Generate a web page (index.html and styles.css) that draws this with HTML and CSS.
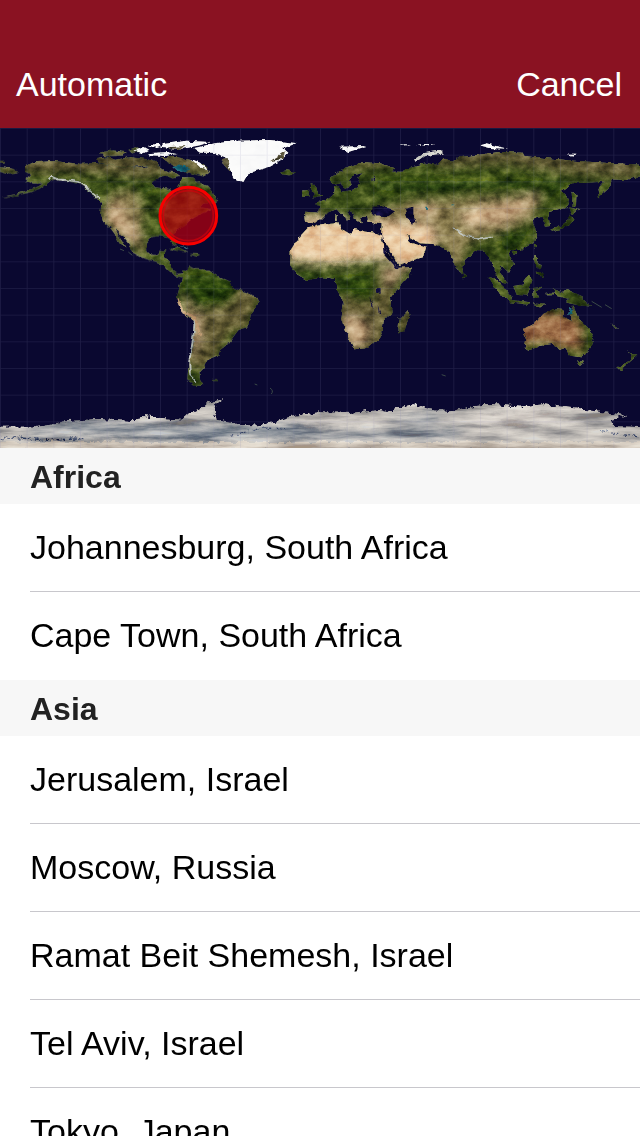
FILE: index.html
```html
<!DOCTYPE html>
<html lang="en">
<head>
<meta charset="utf-8">
<meta name="viewport" content="width=device-width, initial-scale=1">
<title>Choose a location</title>
<link rel="stylesheet" href="styles.css">
</head>
<body class="screen">
<header class="navbar">
  <button class="navbar-button" type="button">Automatic</button>
  <button class="navbar-button" type="button">Cancel</button>
</header>
<svg class="map" viewBox="0 0 1920 960" role="img" aria-label="World map">
  <defs>
    <filter id="terrain" filterUnits="userSpaceOnUse" x="0" y="0" width="1920" height="960" color-interpolation-filters="sRGB">
      <feTurbulence type="fractalNoise" baseFrequency="0.055" numOctaves="3" seed="4" result="coast"/>
      <feDisplacementMap in="SourceGraphic" in2="coast" scale="13" xChannelSelector="R" yChannelSelector="G" result="rough"/>
      <feTurbulence type="fractalNoise" baseFrequency="0.025 0.035" numOctaves="5" seed="9"/>
      <feColorMatrix values="1.3 0 0 0 -0.15  1.2 0 0 0 -0.1  1 0 0 0 0  0 0 0 0 1"/>
      <feComposite in2="rough" operator="in" result="grain"/>
      <feBlend in="grain" in2="rough" mode="soft-light"/>
    </filter>
    <filter id="soft" filterUnits="userSpaceOnUse" x="0" y="0" width="1920" height="960">
      <feGaussianBlur stdDeviation="14"/>
    </filter>
    <filter id="ice" filterUnits="userSpaceOnUse" x="0" y="780" width="1920" height="180" color-interpolation-filters="sRGB">
      <feTurbulence type="fractalNoise" baseFrequency="0.06" numOctaves="4" seed="2" result="coast"/>
      <feDisplacementMap in="SourceGraphic" in2="coast" scale="20" xChannelSelector="R" yChannelSelector="G" result="rough"/>
      <feTurbulence type="fractalNoise" baseFrequency="0.006 0.04" numOctaves="5" seed="5"/>
      <feColorMatrix values="2.2 0 0 0 -0.6  2 0 0 0 -0.5  1.7 0 0 0 -0.35  0 0 0 0 1"/>
      <feComposite in2="rough" operator="in" result="grain"/>
      <feBlend in="grain" in2="rough" mode="soft-light"/>
    </filter>
    <pattern id="grid" width="80" height="80" patternUnits="userSpaceOnUse">
      <path class="grid-line" d="M1 0V80M0 1H80"/>
    </pattern>
    <g id="land">
      <!-- North America -->
      <g transform="translate(0 -24)">
        <path d="M75 140L100 128L160 124L240 132L290 130L330 136L380 140L420 144L450 138L480 145L515 160L480 170L455 190L465 202L510 208L525 228L535 205L545 172L580 173L602 190L622 198L635 215L655 240L640 250L610 250L600 262L635 268L590 288L570 300L555 315L530 330L522 345L530 375L518 372L505 350L480 348L455 350L440 368L442 392L455 405L475 405L480 390L496 392L490 415L510 425L515 450L530 462L552 460L550 472L530 468L505 450L490 432L460 422L430 414L400 398L385 370L365 345L345 325L360 355L378 382L362 370L345 342L328 320L310 305L300 285L305 250L285 230L262 208L235 190L200 182L165 178L145 188L118 206L90 216L50 226L5 232L50 222L80 212L115 200L130 190L100 190L75 182L95 166L75 158Z"/>
        <path d="M0 142L40 148L54 156L30 160L0 152Z M0 123h14v4H0Z M290 118L325 112L345 120L390 112L440 118L470 128L490 150L440 136L390 140L330 134L292 126Z M300 98L340 92L380 98L365 106L310 108Z M385 90L410 82L425 92L402 98Z M480 112L530 112L570 120L610 135L630 155L612 168L582 162L545 148L510 128Z M495 155L525 158L540 168L520 175L500 168Z"/>
        <path d="M508 386L530 380L562 396L545 394L525 390Z M570 402L600 403L590 410Z"/>
      </g>
      <!-- South America -->
      <path transform="translate(420 336)" d="M130 95L150 80L165 88L205 90L240 112L270 125L282 145L320 158L350 172L356 188L337 215L332 240L320 262L295 270L282 288L265 310L240 330L235 345L210 355L195 370L190 385L178 398L180 420L190 437L160 437L142 420L146 370L160 320L165 245L140 225L120 195L108 172L115 140L128 120Z M216 418h16v5h-16Z"/>
      <!-- Africa, Europe and Asia -->
      <g transform="translate(840 -24)">
        <path d="M85 322L110 315L150 308L175 307L182 325L210 342L225 328L260 335L285 338L300 345L315 385L335 415L352 444L394 441L390 465L350 510L330 535L338 575L310 605L308 635L290 665L255 685L222 688L205 650L183 597L192 550L170 507L165 477L130 472L80 480L50 462L30 435L32 390L55 355Z M385 570L388 585L372 637L355 640L358 597Z"/>
        <path d="M148 177L190 145L250 127L300 130L345 145L330 162L280 172L275 184L238 186L232 172L250 158L225 165L210 180L215 195L195 207L185 190L160 194Z"/>
        <path d="M72 275L115 278L118 262L105 248L135 240L162 222L165 198L178 203L185 215L230 207L245 183L280 182L290 162L330 155L365 155L390 140L440 130L475 135L490 115L520 125L540 112L600 104L660 96L725 98L730 108L800 115L880 122L970 128L1080 134L1080 168L1040 180L995 178L990 202L957 232L952 205L970 185L920 188L880 190L845 212L868 235L860 260L805 277L810 318L795 320L785 290L755 300L772 340L760 370L720 390L695 390L687 405L702 430L687 458L665 438L658 455L677 492L650 460L630 420L615 392L590 390L555 422L545 460L530 450L510 400L485 382L460 372L420 370L380 345L392 368L410 374L438 384L430 408L358 438L345 415L320 375L303 350L305 312L265 308L262 290L240 290L245 310L225 297L212 270L205 275L210 302L190 290L170 268L145 277L120 302L100 310L75 305Z"/>
        <path d="M92 193L106 195L114 215L128 230L94 236L105 222L95 210Z M68 212L88 209L85 230L66 230Z M0 155L20 151L48 157L30 166L5 163Z M548 455L558 470L550 475Z M165 286h8v16h-8Z"/>
      </g>
      <!-- Japan and the Philippines -->
      <g transform="translate(1320 -24)">
        <path d="M333 330L365 316L385 300L390 280L400 298L388 316L345 336Z M388 262L418 270L395 282Z M395 212L409 225L408 258L398 262Z M282 372L292 372L286 388Z M282 405L294 410L292 432L305 435L302 450L285 435Z M290 455L312 458L310 474L298 470Z M218 392L230 394L224 405Z"/>
      </g>
      <!-- Indonesia and Oceania -->
      <g transform="translate(1350 336)">
        <path d="M115 110L135 116L162 142L184 168L180 182L150 162Z M136 90L152 100L170 132L158 130L142 112Z M190 138L215 134L235 106L247 120L232 167L200 164Z M172 178L240 187L236 194L178 187Z M250 144L276 140L256 152L268 172L250 174Z M308 148L335 156L355 150L395 168L404 186L424 200L378 194L345 187L355 176L320 168Z M284 158h25v5h-25Z M248 190l40 4l-20 8Z"/>
        <path d="M216 270L260 245L280 222L310 207L340 210L338 228L362 240L369 196L385 235L412 260L431 295L415 335L395 352L360 347L345 325L330 330L305 312L270 317L235 332L224 325L229 300Z M382 360L402 362L392 378Z M532 330L544 346L562 346L540 366L544 354Z M502 386L530 366L544 362L514 390Z M484 250l20 14l-4 2Z"/>
      </g>
    </g>
    <mask id="land-mask" class="alpha-mask" maskUnits="userSpaceOnUse" x="0" y="0" width="1920" height="960"><use href="#land"/></mask>
    <path id="antarctica" d="M-20 896L100 896L150 888L200 880L290 873L350 877L410 880L422 864L480 870L545 875L565 858L600 846L625 825L670 812L640 836L650 876L720 891L770 893L820 883L880 864L960 853L1050 855L1140 846L1160 852L1190 841L1240 829L1290 843L1350 850L1400 838L1475 828L1560 836L1630 829L1720 841L1770 848L1880 861L1832 876L1840 894L1940 898V990H-20Z"/>
    <mask id="ice-mask" class="alpha-mask" maskUnits="userSpaceOnUse" x="-20" y="780" width="1960" height="200"><use href="#antarctica"/></mask>
  </defs>
  <rect class="ocean" width="1920" height="960"/>
  <g filter="url(#terrain)">
    <use class="forest" href="#land"/>
    <g mask="url(#land-mask)"><g filter="url(#soft)">
      <path class="tundra" d="M0 70H660V145L540 135L430 150L290 136L160 135L0 135Z M980 145L1100 85H1220L1200 112L1070 120Z M1300 60H1920V155L1740 142L1520 110L1300 118Z"/>
      <path class="steppe" d="M330 200L400 190L430 240L425 310L440 375L410 370L340 300L295 280Z M1230 220L1420 208L1630 203L1600 270L1530 300L1450 330L1400 350H1240L1160 290L1090 260Z M905 250H970V282H905Z M1320 320L1400 330L1390 400L1360 430Z"/>
      <path class="desert" d="M320 235L365 225L375 270L420 310L405 345L360 325L325 290Z M1430 238L1620 200L1560 265L1490 290L1400 270Z M1140 280L1290 300L1300 345L1160 340Z M1230 238L1300 225L1310 265L1250 265Z"/>
      <path class="savanna" d="M700 455L780 490L740 600L690 610L630 720H560L580 560L650 520Z M1015 510L1180 470L1180 570L1130 680L1040 670Z M1130 410L1240 400L1170 500L1140 480Z M1200 540H1240V620H1190Z"/>
      <path class="sand" d="M850 285L1010 270L1300 295L1310 380L1210 425L1170 390L1140 395L1000 410L855 398Z M1380 260L1440 250L1460 280L1410 290Z"/>
      <path class="desert" d="M1010 565L1070 570L1110 600L1090 650L1045 655Z M535 500L600 560L600 620L570 700L565 570Z M1150 430L1210 425L1170 475Z"/>
      <path class="outback" d="M1530 580L1620 550L1710 560L1770 610L1760 670L1690 660L1620 640L1540 660Z"/>
      <path class="jungle" d="M555 440L660 440L730 470L690 530L630 540L560 520Z M1010 450L1120 440L1130 520L1070 520L1015 490Z M1130 158L1530 160L1720 160L1650 205L1500 185L1300 190L1130 185Z M340 160L520 165L450 190L360 185Z M880 420L960 425V450H900Z"/>
      <path class="jungle" d="M1740 575L1780 620L1770 670L1740 660Z M1500 300L1590 290L1560 350L1510 370Z"/>
    </g></g>
    <path class="sea" d="M1118 236L1145 234L1185 250L1165 265L1115 262Z M1215 242L1240 236L1240 262L1250 280L1236 290L1222 270Z M1128 480h14v14h-14Z M1108 504l12 34h-5Z M1136 530l8 26h-5Z M1148 320L1160 370L1196 422L1190 424L1150 378Z"/>
    <path class="inland-water" d="M515 118L550 110L570 125L545 132Z M1276 236h8v9h-8Z M1352 232l14 3h-14Z M1704 560l8-24l7 22Z M538 350l16 4l12 8Z"/>
    <path class="snow" d="M580 61L645 46L710 38L810 36L890 46L850 61L865 74L845 96L810 116L745 136L730 162L705 151L690 126L675 86L640 74L600 74Z M490 48L560 38L630 42L600 52L540 64L480 56Z M445 76L500 72L530 78L500 84L450 82Z M400 68L430 60L445 68L430 76Z M440 54L470 48L480 54L460 60Z M1018 56L1102 54L1045 72Z M1438 52L1460 46L1490 55L1525 62L1470 60Z M1700 77l30 0l-15 6Z M1200 48l30 2l-28 3Z M1248 48l58 0l-30 5Z M572 92L600 104L625 128L600 118Z"/>
    <path class="ridge" d="M1245 98L1270 80L1327 72"/>
    <path class="snow-range" d="M145 158L155 146L175 154L200 156L235 162L262 180L300 212 M585 568L580 630L568 700L570 742L590 762 M1363 300L1400 324L1440 334L1475 328"/>
    <path class="mountain-edge" d="M533 515L548 550L585 570L600 620"/>
    <path class="rock" d="M664 94L680 90L692 132L672 112Z M810 100L855 70L850 92Z M500 58L560 54L540 64Z"/>
  </g>
  <g filter="url(#ice)">
    <use class="ice-base" href="#antarctica"/>
    <g mask="url(#ice-mask)">
      <g filter="url(#soft)">
        <path class="ice-shadow" d="M60 905L250 885L560 895L900 890L1000 925L600 940L330 920L100 925Z M1150 870L1340 855L1280 890Z M960 912L1400 905L1350 930L960 935Z"/>
        <path class="ice-light" d="M1380 860L1600 840L1740 860L1640 890L1450 890Z M880 870L1160 860L1120 880L900 890Z"/>
      </g>
      <path class="ice-crack" d="M0 932L60 930L150 936L250 932 M1800 908L1860 920L1920 926 M690 925L780 900L860 902"/>
      <path class="ice-rim" d="M-20 953H1940"/>
    </g>
  </g>
  <path class="islands" d="M360 363l12 5M385 372l12 10M1325 740l12 4M764 768l8 3M810 780q12 8 4 18M1775 520l30 18M1815 530l20 12"/>
  <rect class="grid" width="1920" height="960"/>
  <circle class="marker" cx="565" cy="263" r="85"/>
  <circle class="marker-ring" cx="565" cy="263" r="75"/>
</svg>
<main class="locations">
  <section>
    <h2 class="region">Africa</h2>
    <ul class="cities">
      <li class="city"><button class="city-button" type="button">Johannesburg, South Africa</button></li>
      <li class="city"><button class="city-button" type="button">Cape Town, South Africa</button></li>
    </ul>
  </section>
  <section>
    <h2 class="region">Asia</h2>
    <ul class="cities">
      <li class="city"><button class="city-button" type="button">Jerusalem, Israel</button></li>
      <li class="city"><button class="city-button" type="button">Moscow, Russia</button></li>
      <li class="city"><button class="city-button" type="button">Ramat Beit Shemesh, Israel</button></li>
      <li class="city"><button class="city-button" type="button">Tel Aviv, Israel</button></li>
      <li class="city"><button class="city-button" type="button">Tokyo, Japan</button></li>
    </ul>
  </section>
</main>
</body>
</html>
```

FILE: styles.css
```css
* { box-sizing: border-box; }

.screen {
  margin: 0;
  height: 100vh;
  display: flex;
  flex-direction: column;
  background: #fff;
  color: #000;
  font-family: "Liberation Sans", Arial, sans-serif;
  font-size: 34px;
  line-height: 40px;
}

.navbar {
  flex: none;
  display: flex;
  justify-content: space-between;
  padding: 40px 16px 0;
  background: #8a1222;
}

.navbar-button {
  height: 88px;
  padding: 0 2px 0 0;
  border: 0;
  background: none;
  color: #fff;
  font: inherit;
}

.map {
  flex: none;
  display: block;
  width: 100%;
  height: auto;
}

.ocean, .sea { fill: #0a0830; }
.grid { fill: url(#grid); }
.grid-line { fill: none; stroke: #8c8cb4; stroke-opacity: 0.16; stroke-width: 3; }
.alpha-mask { mask-type: alpha; }

.forest { fill: #3e5119; }
.tundra { fill: #5f5833; }
.steppe { fill: #8a7c4e; }
.desert { fill: #c4a57e; }
.savanna { fill: #625a30; }
.sand { fill: #ebcca4; }
.outback { fill: #a0704a; }
.jungle { fill: #2a4510; }
.inland-water { fill: #146878; }
.snow { fill: #fafafa; }
.ridge { fill: none; stroke: #d8d8d0; stroke-width: 9; }
.snow-range { fill: none; stroke: #b4bab4; stroke-width: 5; }
.mountain-edge { fill: none; stroke: #c09a70; stroke-width: 7; }
.rock { fill: #504a30; }

.ice-base { fill: #b9b5b1; }
.ice-shadow { fill: #8a929b; }
.ice-light { fill: #d8d1ca; }
.ice-crack { fill: none; stroke: #3d4a6c; stroke-width: 4; stroke-dasharray: 14 5 6 9; }
.ice-rim { fill: none; stroke: #cdc3b7; stroke-width: 22; }
.islands { fill: none; stroke: #3c4a48; stroke-width: 3; }

.marker { fill: #c0000c; fill-opacity: 0.68; stroke: #f80000; stroke-width: 9; }
.marker-ring { fill: none; stroke: #d8000c; stroke-opacity: 0.6; stroke-width: 5; }

.locations {
  flex: 1;
  min-height: 0;
  overflow-y: auto;
  scrollbar-width: none;
}

.region {
  margin: 0;
  padding: 9px 30px 7px;
  background: #f7f7f7;
  color: #222;
  font-size: 32px;
  font-weight: bold;
}

.cities {
  margin: 0;
  padding: 0 0 0 30px;
  list-style: none;
}

.city { border-bottom: 1px solid #c8c7cc; }
.city:last-child { border-bottom: 0; }

.city-button {
  display: block;
  width: 100%;
  padding: 23px 0 24px;
  border: 0;
  background: none;
  color: inherit;
  font: inherit;
  text-align: left;
}

.city:last-child .city-button { padding-bottom: 25px; }
```
